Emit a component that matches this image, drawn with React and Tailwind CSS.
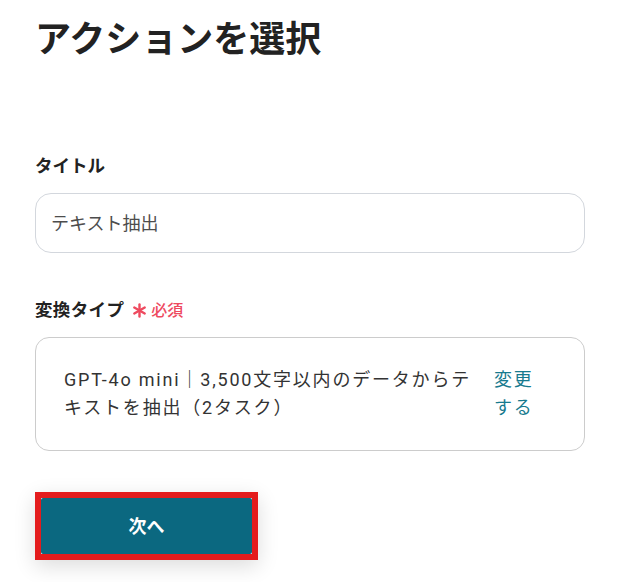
export default function App() {
  return (
    <div className="w-[617px] h-[582px] bg-white pl-[35px] pr-[32px] pt-[19px] font-['Roboto','Noto_Sans_CJK_JP',sans-serif]">
      <h1 className="text-[36px] leading-[43px] font-bold text-[#222222]">アクションを選択</h1>

      <div className="mt-[92px] text-[17.5px] leading-[25px] font-bold text-[#222222]">タイトル</div>
      <div className="mt-[14px] h-[60px] w-[550px] rounded-[16px] border border-[#d3d7dd] flex items-center pl-[15px] text-[18px] text-[#4d4d4d]">
        テキスト抽出
      </div>

      <div className="mt-[45px] flex items-center text-[17.5px] leading-[25px] font-bold text-[#222222]">
        <span className="tracking-[0.02em]">変換タイプ</span>
        <svg className="ml-[8px]" width="15" height="15" viewBox="0 0 15 15" fill="none" stroke="#ee4a5f" strokeWidth="2.4" strokeLinecap="round">
          <line x1="7.5" y1="1.5" x2="7.5" y2="13.5" />
          <line x1="2.3" y1="4.5" x2="12.7" y2="10.5" />
          <line x1="2.3" y1="10.5" x2="12.7" y2="4.5" />
        </svg>
        <span className="ml-[4px] text-[16px] font-medium text-[#ee4a5f]">必須</span>
      </div>
      <div className="mt-[14px] h-[114px] w-[550px] rounded-[14px] border border-[#cccccc] flex items-center pl-[28px] pr-[48px] gap-[19px]">
        <div className="flex-1 text-[18px] leading-[28px] tracking-[0.1em] text-[#333333]">
          GPT-4o mini｜3,500文字以内のデータからテキストを抽出（2タスク）
        </div>
        <div className="w-[42px] text-[18px] leading-[28px] tracking-[0.1em] text-[#177a8e]">変更する</div>
      </div>

      <div className="mt-[41px] w-[223px] h-[68px] border-[6px] border-[#e41c1d] bg-white shadow-[0_6px_20px_rgba(0,0,0,0.14)]">
        <button className="w-full h-full rounded-[2px] bg-[#0b6880] text-white text-[18px] font-bold flex items-center justify-center">
          次へ
        </button>
      </div>
    </div>
  );
}
